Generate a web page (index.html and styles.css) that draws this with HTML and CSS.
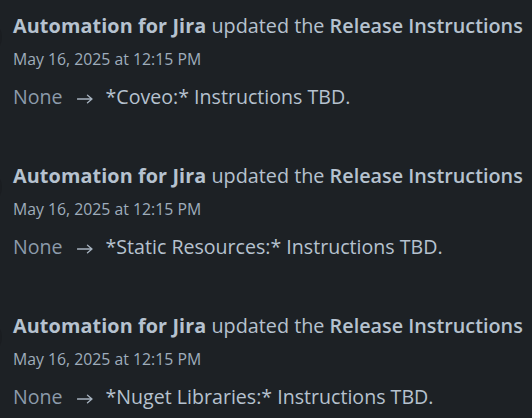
FILE: index.html
```html
<!DOCTYPE html>
<html>
<head>
<meta charset="utf-8">
<link rel="stylesheet" href="styles.css">
</head>
<body>
<div class="feed">
  <div class="entry">
    <div class="avatar"></div>
    <div class="content">
      <div class="head"><span class="who">Automation for Jira</span> updated the <span class="field">Release Instructions</span></div>
      <div class="date">May 16, 2025 at 12:15 PM</div>
      <div class="change"><span class="old">None</span><svg class="arrow" viewBox="0 0 16 10" width="16" height="10"><path d="M0.5 5H15M10.5 1.2L15 5L10.5 8.8" fill="none" stroke="currentColor" stroke-width="1.3" stroke-linejoin="round" stroke-linecap="round"/></svg><span class="new">*Coveo:* Instructions TBD.</span></div>
    </div>
  </div>
  <div class="entry">
    <div class="avatar"></div>
    <div class="content">
      <div class="head"><span class="who">Automation for Jira</span> updated the <span class="field">Release Instructions</span></div>
      <div class="date">May 16, 2025 at 12:15 PM</div>
      <div class="change"><span class="old">None</span><svg class="arrow" viewBox="0 0 16 10" width="16" height="10"><path d="M0.5 5H15M10.5 1.2L15 5L10.5 8.8" fill="none" stroke="currentColor" stroke-width="1.3" stroke-linejoin="round" stroke-linecap="round"/></svg><span class="new">*Static Resources:* Instructions TBD.</span></div>
    </div>
  </div>
  <div class="entry">
    <div class="avatar"></div>
    <div class="content">
      <div class="head"><span class="who">Automation for Jira</span> updated the <span class="field">Release Instructions</span></div>
      <div class="date">May 16, 2025 at 12:15 PM</div>
      <div class="change"><span class="old">None</span><svg class="arrow" viewBox="0 0 16 10" width="16" height="10"><path d="M0.5 5H15M10.5 1.2L15 5L10.5 8.8" fill="none" stroke="currentColor" stroke-width="1.3" stroke-linejoin="round" stroke-linecap="round"/></svg><span class="new">*Nuget Libraries:* Instructions TBD.</span></div>
    </div>
  </div>
</div>
</body>
</html>
```
FILE: styles.css
```css
html, body {
  margin: 0;
  padding: 0;
  background: #1d2125;
  height: 100%;
}
body {
  font-family: "Open Sans", "Noto Sans", sans-serif;
  color: #b6c2cf;
  overflow: hidden;
}
.feed {
  display: flex;
  flex-direction: column;
  padding-top: 13px;
}
.entry {
  display: flex;
  height: 150px;
  flex: none;
}
.avatar {
  flex: none;
  width: 36px;
  height: 36px;
  border-radius: 50%;
  background: #1a1d21;
  margin-left: -34px;
  margin-top: 6px;
  margin-right: 11px;
}
.content {
  display: flex;
  flex-direction: column;
}
.head {
  font-size: 19.8px;
  line-height: 26px;
  white-space: nowrap;
  color: #b6c2cf;
}
.who {
  font-weight: 700;
  letter-spacing: 0.1px;
}
.field { font-weight: 600; }
.date {
  font-size: 15.8px;
  line-height: 20px;
  margin-top: 10px;
  color: #9fadbc;
}
.change {
  display: flex;
  align-items: baseline;
  font-size: 19.6px;
  line-height: 26px;
  margin-top: 15px;
  white-space: nowrap;
}
.old { color: #8c9bab; }
.arrow {
  flex: none;
  display: block;
  color: #a7b3c0;
  margin: 0 13px 0 14px;
}
.new { color: #b6c2cf; }
```
